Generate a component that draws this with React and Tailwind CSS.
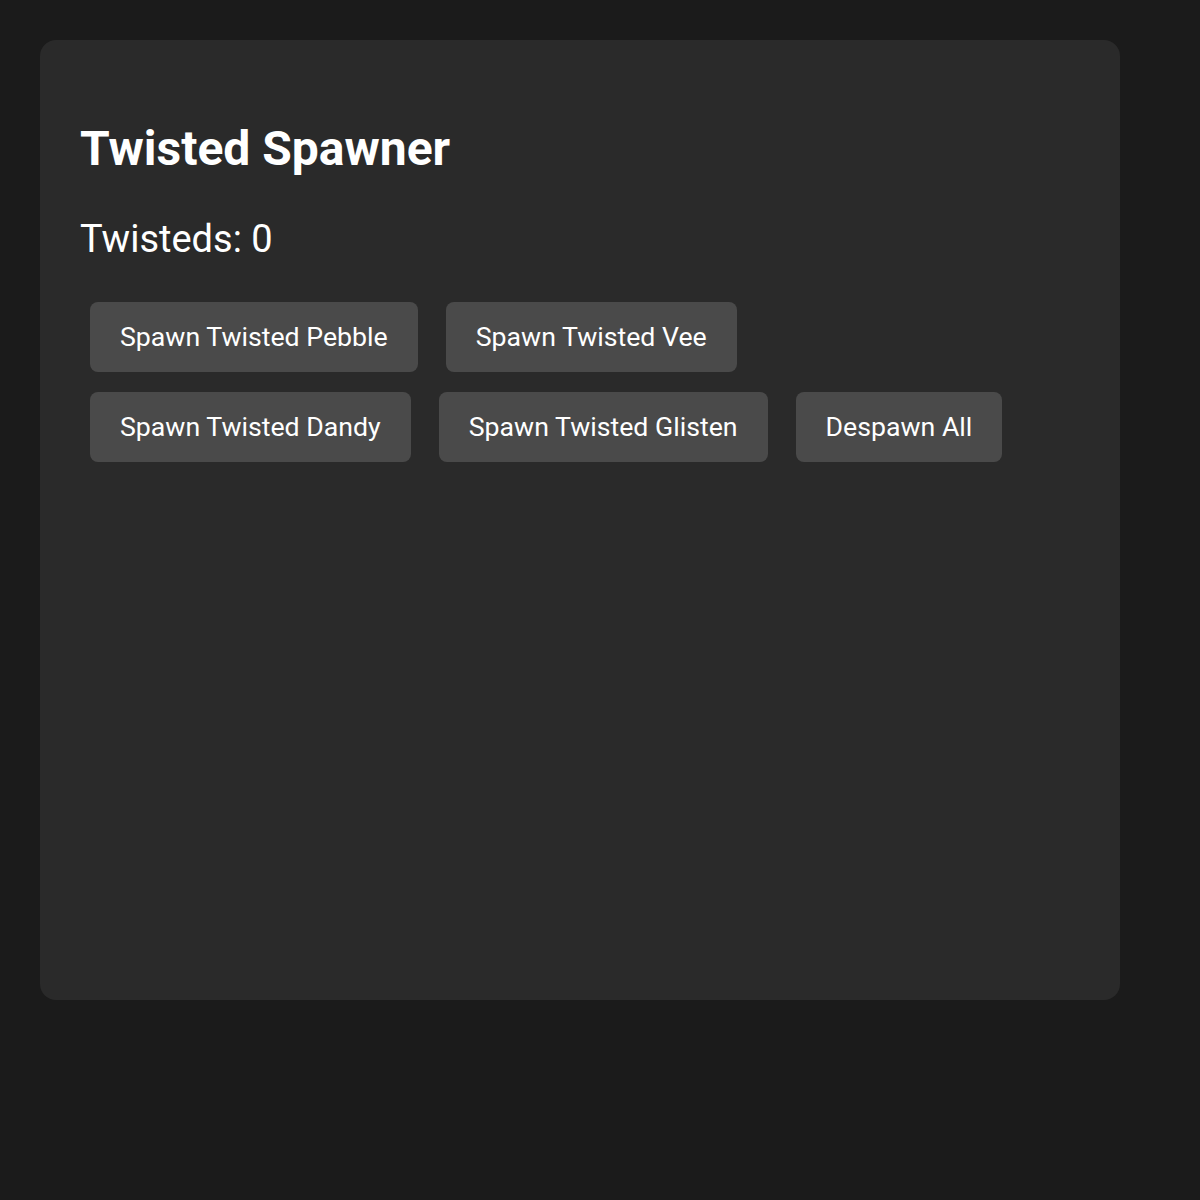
import React, { useState } from 'react';

const TWISTEDS = ['Pebble', 'Vee', 'Dandy', 'Glisten'];

function SpawnButton({ children, onClick }) {
  return (
    <button
      onClick={onClick}
      className="h-[70px] px-[30px] rounded-lg bg-[#4a4a4a] text-[26.7px] text-white hover:bg-[#555] transition-colors"
    >
      {children}
    </button>
  );
}

export default function App() {
  const [count, setCount] = useState(0);

  return (
    <div className="min-h-screen bg-[#1b1b1b] p-10 font-['Roboto',sans-serif]">
      <div className="w-[1080px] h-[960px] rounded-2xl bg-[#2a2a2a] px-10 pt-[81px]">
        <h1 className="text-[48px] leading-[56px] font-bold text-white">Twisted Spawner</h1>
        <p className="mt-[40px] text-[38px] leading-[44px] text-white">Twisteds: {count}</p>
        <div className="mt-[41px] px-[10px] w-[990px] flex flex-wrap gap-x-[28px] gap-y-[20px]">
          {TWISTEDS.map((name) => (
            <SpawnButton key={name} onClick={() => setCount((c) => c + 1)}>
              Spawn Twisted {name}
            </SpawnButton>
          ))}
          <SpawnButton onClick={() => setCount(0)}>Despawn All</SpawnButton>
        </div>
      </div>
    </div>
  );
}
